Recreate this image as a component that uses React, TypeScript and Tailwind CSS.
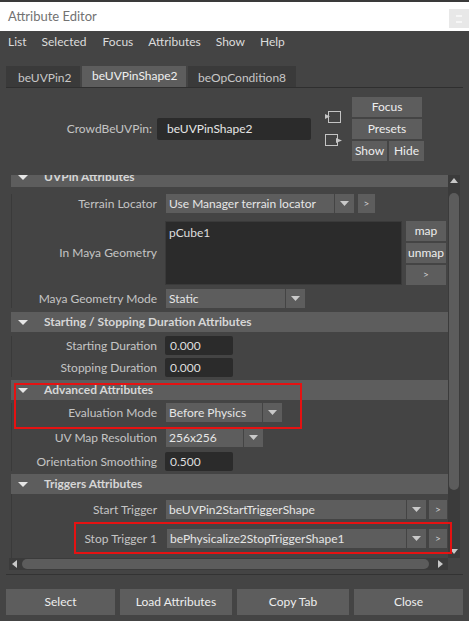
import React from "react";

const FONT = { fontFamily: "Lato, 'Noto Sans', sans-serif" };

function Arrow({ className = "" }: { className?: string }) {
  return (
    <svg width="9" height="5" viewBox="0 0 9 5" className={className}>
      <polygon points="0,0 9,0 4.5,5" fill="#c9c9c9" />
    </svg>
  );
}

function Dropdown({ w, value }: { w: string; value: string }) {
  return (
    <div className="flex h-[19px]">
      <div className={`${w} bg-[#5d5d5d] text-[#e6e6e6] text-[12px] leading-[19px] pl-[3px] whitespace-nowrap overflow-hidden`}>
        {value}
      </div>
      <div className="ml-px w-[19px] bg-[#5d5d5d] flex items-center justify-center">
        <Arrow />
      </div>
    </div>
  );
}

function SmallBtn({ className = "" }: { className?: string }) {
  return (
    <div className={`h-[19px] bg-[#5d5d5d] text-[#d0d0d0] text-[10px] leading-[19px] text-center ${className}`}>
      &gt;
    </div>
  );
}

function Label({ children }: { children: React.ReactNode }) {
  return (
    <div className="w-[145px] shrink-0 text-right text-[12px] text-[#c4c4c4] whitespace-nowrap">
      {children}
    </div>
  );
}

function Header({ title, className = "" }: { title: string; className?: string }) {
  return (
    <div className={`h-[20px] bg-[#5d5d5d] flex items-center ${className}`}>
      <svg width="10" height="5" viewBox="0 0 10 5" className="ml-[7px]">
        <polygon points="0,0 10,0 5,5" fill="#e6e6e6" />
      </svg>
      <div className="ml-[16px] text-[12px] font-bold text-[#d6d6d6] whitespace-nowrap">{title}</div>
    </div>
  );
}

function FloatField({ value }: { value: string }) {
  return (
    <div className="ml-[8px] w-[68px] h-[19px] bg-[#2b2b2b] rounded-[2px] text-[12px] leading-[20px] text-[#dedede] pl-[5px]">
      {value}
    </div>
  );
}

function Btn({ label, className = "" }: { label: string; className?: string }) {
  return (
    <div className={`bg-[#5d5d5d] text-[#eeeeee] text-[12px] flex items-center justify-center ${className}`}>
      {label}
    </div>
  );
}

export default function App() {
  return (
    <div className="w-[469px] h-[621px] bg-[#444444] flex flex-col overflow-hidden" style={FONT}>
      {/* title bar */}
      <div className="h-[31px] shrink-0 bg-white border-t-2 border-[#3a3a3a] flex items-center">
        <div className="ml-[8px] text-[13px] text-[#727272]">Attribute Editor</div>
        <div className="ml-auto mt-[4px] w-[20px] h-[19px] bg-[#e8e8e8] flex items-center justify-center">
          <div className="w-[6px] h-[8px] border-y-2 border-[#f6f6f6]" />
        </div>
      </div>

      {/* menu */}
      <div className="h-[21px] shrink-0 flex items-center text-[12px] text-[#dcdcdc] pl-[8px]">
        <span>List</span>
        <span className="ml-[15px]">Selected</span>
        <span className="ml-[16px]">Focus</span>
        <span className="ml-[15px]">Attributes</span>
        <span className="ml-[15px]">Show</span>
        <span className="ml-[15px]">Help</span>
      </div>

      {/* tabs */}
      <div className="mt-[14px] mx-[6px] h-[22px] shrink-0 flex border-b border-[#2f2f2f] text-[12px]">
        <div className="w-[74px] bg-[#3a3a3a] text-[#c8c8c8] pl-[12px] leading-[23px]">beUVPin2</div>
        <div className="ml-[2px] w-[104px] bg-[#5d5d5d] text-[#f0f0f0] pl-[10px] leading-[19px]">beUVPinShape2</div>
        <div className="ml-[2px] w-[108px] bg-[#3a3a3a] text-[#c8c8c8] pl-[10px] leading-[23px]">beOpCondition8</div>
      </div>

      {/* node name area */}
      <div className="shrink-0 pt-[9px] pb-[14px] px-[6px] flex items-center">
        <div className="w-[146px] text-right text-[12px] text-[#c4c4c4]">CrowdBeUVPin:</div>
        <div className="ml-[5px] w-[154px] h-[22px] bg-[#2b2b2b] rounded-[2px] text-[12px] leading-[22px] text-[#e6e6e6] pl-[10px]">
          beUVPinShape2
        </div>
        <div className="ml-[14px] w-[18px] flex flex-col gap-[10px]">
          <svg width="16" height="13" viewBox="0 0 16 13">
            <rect x="3.5" y="0.5" width="12" height="11" fill="none" stroke="#c4c4c4" strokeWidth="1" />
            <polygon points="0,3 5,5.5 0,8" fill="#c4c4c4" />
          </svg>
          <svg width="18" height="13" viewBox="0 0 18 13">
            <rect x="0.5" y="0.5" width="12" height="11" fill="none" stroke="#c4c4c4" strokeWidth="1" />
            <polygon points="11,4 17,6.5 11,9" fill="#c4c4c4" />
          </svg>
        </div>
        <div className="ml-[9px] flex flex-col gap-[2px]">
          <Btn label="Focus" className="w-[70px] h-[20px]" />
          <Btn label="Presets" className="w-[70px] h-[20px]" />
          <div className="flex gap-[2px]">
            <Btn label="Show" className="w-[35px] h-[20px]" />
            <Btn label="Hide" className="w-[35px] h-[20px]" />
          </div>
        </div>
      </div>

      {/* scroll area */}
      <div className="relative mx-[9px] shrink-0">
        <div className="flex h-[383px]">
          <div className="flex-1 overflow-hidden pl-[2px] bg-[#444444]">
            <Header title="UVPin Attributes" className="-mt-[8px]" />
            <div className="border-l border-[#3a3a3a]">
              <div className="mt-[7px] flex items-center">
                <Label>Terrain Locator</Label>
                <div className="ml-[9px]"><Dropdown w="w-[168px]" value="Use Manager terrain locator" /></div>
                <SmallBtn className="ml-[4px] w-[17px]" />
              </div>
              <div className="mt-[8px] flex items-center">
                <Label>In Maya Geometry</Label>
                <div className="ml-[8px] w-[237px] h-[64px] bg-[#2b2b2b] border border-[#3a3a3a] text-[12px] text-[#dedede] pl-[3px] pt-[2px]">
                  pCube1
                </div>
                <div className="ml-[4px] flex flex-col gap-[2px]">
                  <Btn label="map" className="w-[40px] h-[20px]" />
                  <Btn label="unmap" className="w-[40px] h-[20px]" />
                  <SmallBtn className="w-[40px] h-[20px]" />
                </div>
              </div>
              <div className="mt-[4px] flex items-center">
                <Label>Maya Geometry Mode</Label>
                <div className="ml-[9px]"><Dropdown w="w-[119px]" value="Static" /></div>
              </div>
            </div>
            <Header title="Starting / Stopping Duration Attributes" className="mt-[4px]" />
            <div className="border-l border-[#3a3a3a]">
              <div className="mt-[4px] flex items-center">
                <Label>Starting Duration</Label>
                <FloatField value="0.000" />
              </div>
              <div className="mt-[3px] flex items-center">
                <Label>Stopping Duration</Label>
                <FloatField value="0.000" />
              </div>
            </div>
            <Header title="Advanced Attributes" className="mt-[3px]" />
            <div className="border-l border-[#3a3a3a]">
              <div className="mt-[3px] flex items-center">
                <Label>Evaluation Mode</Label>
                <div className="ml-[9px]"><Dropdown w="w-[96px]" value="Before Physics" /></div>
              </div>
              <div className="mt-[6px] flex items-center">
                <Label>UV Map Resolution</Label>
                <div className="ml-[9px]"><Dropdown w="w-[77px]" value="256x256" /></div>
              </div>
              <div className="mt-[5px] flex items-center">
                <Label>Orientation Smoothing</Label>
                <FloatField value="0.500" />
              </div>
            </div>
            <Header title="Triggers Attributes" className="mt-[3px]" />
            <div className="border-l border-[#3a3a3a] h-[80px]">
              <div className="pt-[6px] flex items-center">
                <Label>Start Trigger</Label>
                <div className="ml-[9px]"><Dropdown w="w-[240px]" value="beUVPin2StartTriggerShape" /></div>
                <SmallBtn className="ml-[3px] w-[18px]" />
              </div>
              <div className="mt-[10px] flex items-center">
                <Label>Stop Trigger 1</Label>
                <div className="ml-[10px]"><Dropdown w="w-[239px]" value="bePhysicalize2StopTriggerShape1" /></div>
                <SmallBtn className="ml-[3px] w-[18px]" />
              </div>
            </div>
          </div>
          {/* vertical scrollbar */}
          <div className="w-[12px] bg-[#3b3b3b] flex flex-col items-center">
            <svg width="8" height="5" viewBox="0 0 8 5" className="mt-[3px]">
              <polygon points="0,5 8,5 4,0" fill="#c8c8c8" />
            </svg>
            <div className="mt-[10px] w-[10px] h-[297px] rounded-[5px] bg-[#5c5c5c]" />
            <svg width="8" height="5" viewBox="0 0 8 5" className="mt-auto mb-[4px]">
              <polygon points="0,0 8,0 4,5" fill="#c8c8c8" />
            </svg>
          </div>
        </div>
        {/* horizontal scrollbar */}
        <div className="flex h-[12px]">
          <div className="flex-1 bg-[#3b3b3b] flex items-center">
            <svg width="5" height="8" viewBox="0 0 5 8" className="ml-[3px]">
              <polygon points="5,0 5,8 0,4" fill="#c8c8c8" />
            </svg>
            <div className="ml-[5px] w-[407px] h-[10px] rounded-[5px] bg-[#5c5c5c]" />
            <svg width="5" height="8" viewBox="0 0 5 8" className="ml-[9px]">
              <polygon points="0,0 0,8 5,4" fill="#c8c8c8" />
            </svg>
          </div>
          <div className="w-[12px] bg-[#444444]" />
        </div>

        {/* annotation boxes */}
        <div className="absolute left-[5px] top-[208px] w-[288px] h-[46px] border-2 border-[#e51212] pointer-events-none" />
        <div className="absolute left-[65px] top-[347px] w-[378px] h-[32px] border-2 border-[#e51212] pointer-events-none" />
      </div>

      {/* separator */}
      <div className="mt-[4px] mx-[6px] h-px bg-[#333333] shrink-0" />

      {/* bottom buttons */}
      <div className="mt-[14px] mx-[6px] flex gap-[5px] h-[26px] shrink-0">
        <Btn label="Select" className="w-[109px]" />
        <Btn label="Load Attributes" className="w-[112px]" />
        <Btn label="Copy Tab" className="w-[112px]" />
        <Btn label="Close" className="w-[109px]" />
      </div>
    </div>
  );
}
